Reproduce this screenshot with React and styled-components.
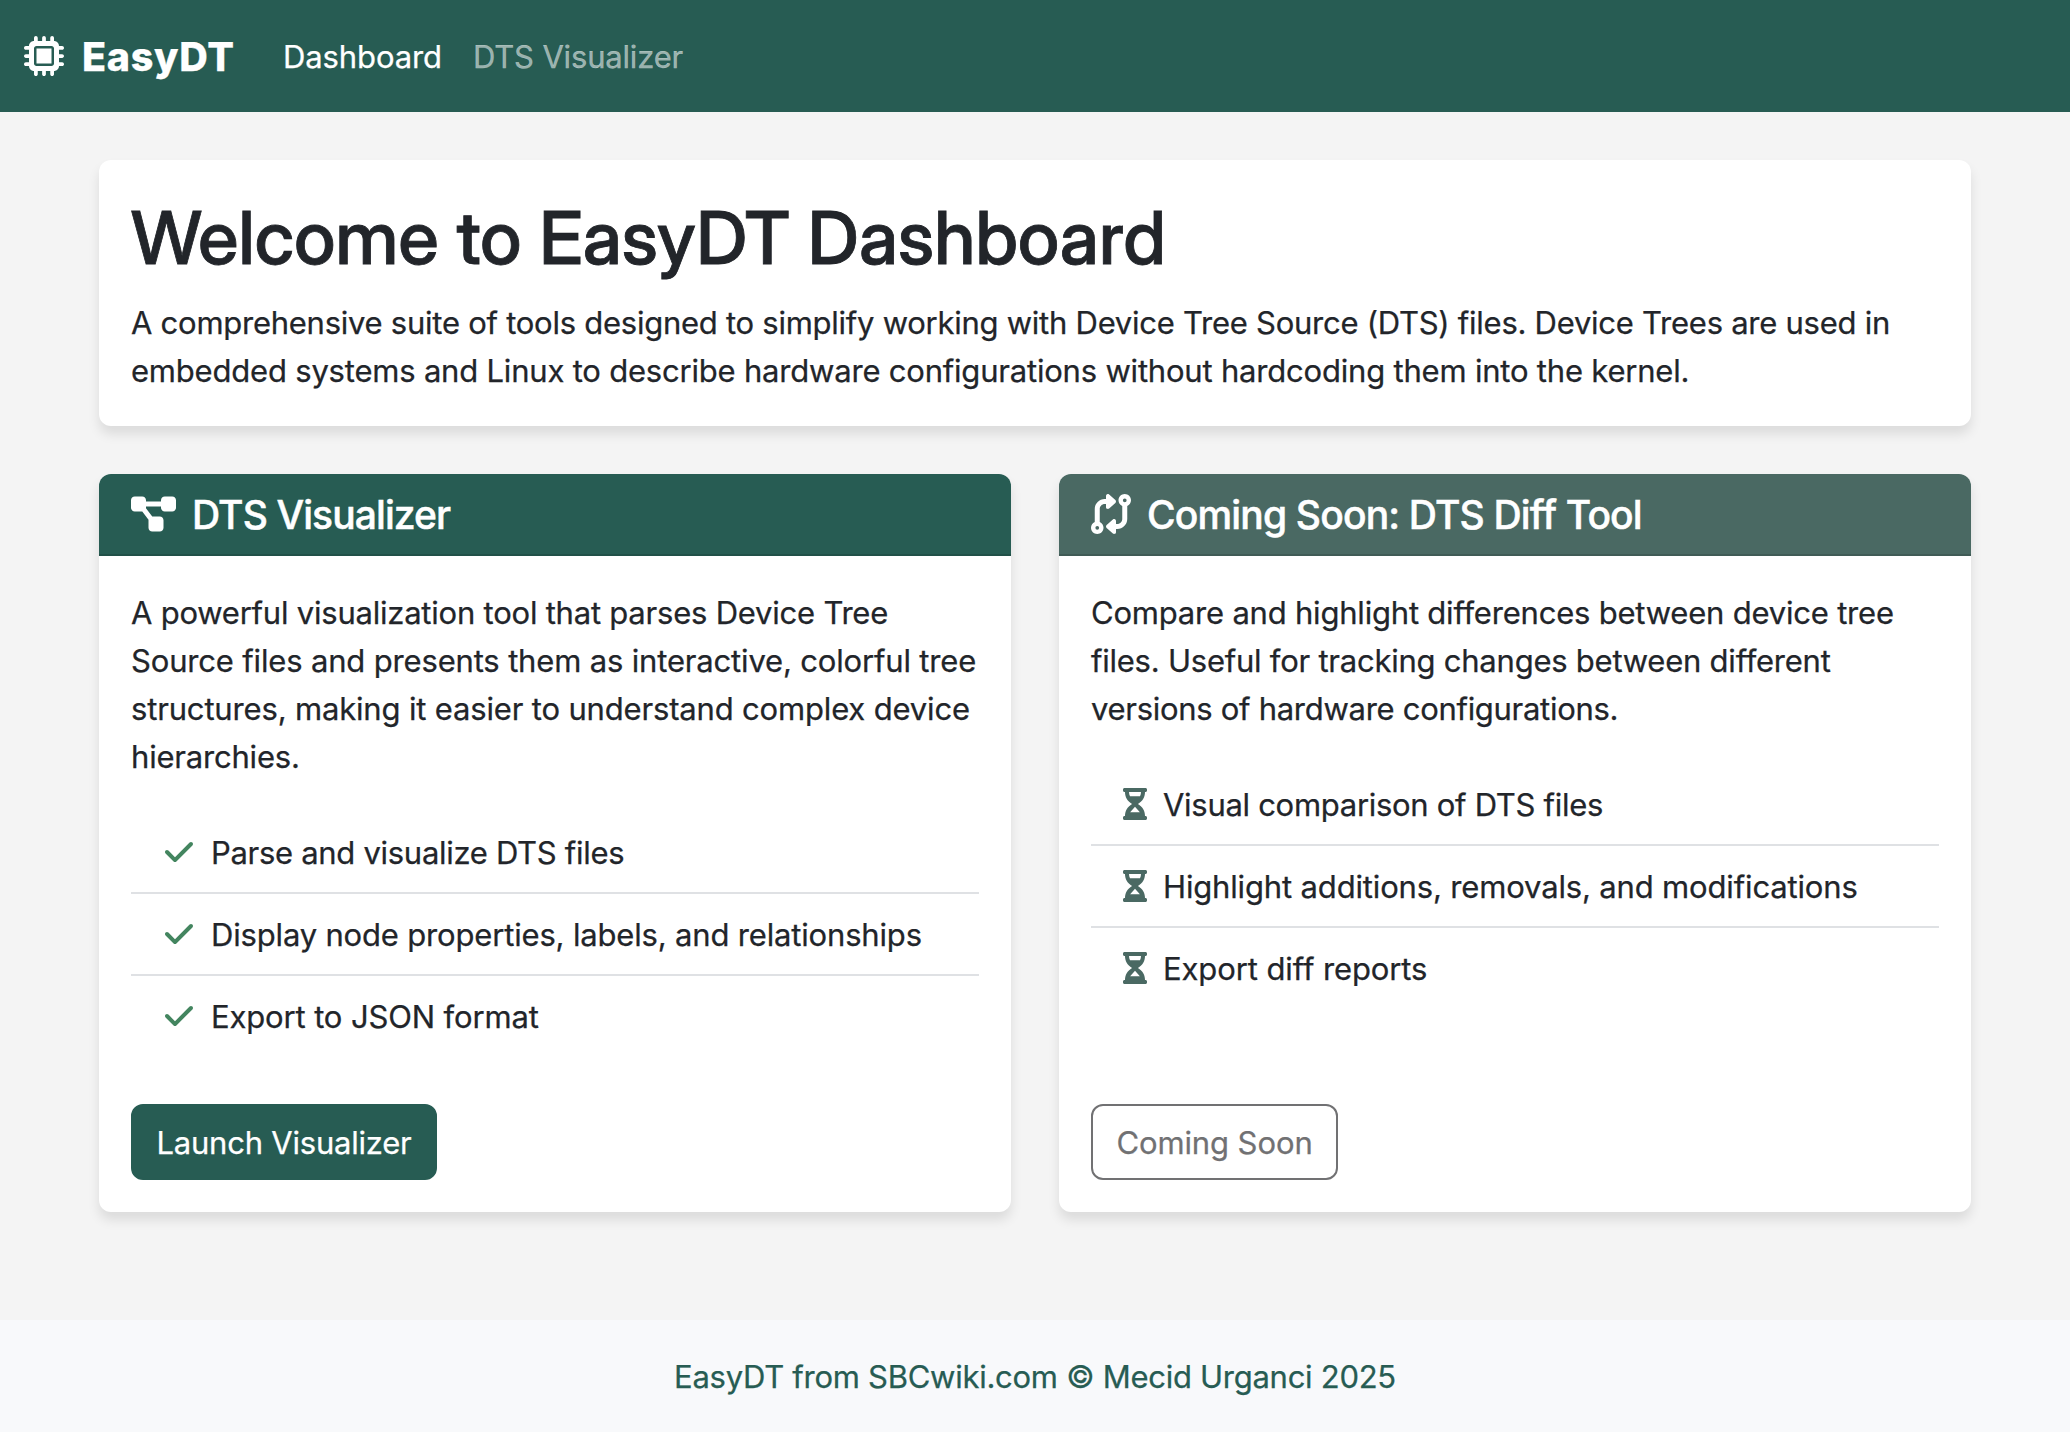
import React from "react";
import styled, { createGlobalStyle } from "styled-components";
import { FaMicrochip, FaDiagramProject, FaCodeCompare } from "react-icons/fa6";

const GlobalStyle = createGlobalStyle`
  *, *::before, *::after { box-sizing: border-box; }
  body {
    margin: 0;
    background: #f4f4f4;
    color: #22252a;
    font-family: Inter, "Liberation Sans", sans-serif;
    font-size: 31px;
    line-height: 48px;
    -webkit-text-stroke-width: 0.25px;
  }
`;

const Page = styled.div`
  display: flex;
  flex-direction: column;
  height: 1432px;
`;

const Navbar = styled.nav`
  display: flex;
  align-items: center;
  height: 112px;
  padding: 0 24px;
  background: #275c53;
  color: #fff;
`;

const Brand = styled.a`
  display: flex;
  align-items: center;
  gap: 18px;
  width: 259px;
  font-size: 39.5px;
  font-weight: 800;
  letter-spacing: 0.7px;
`;

const Label = styled.span`
  padding-top: 2px;
  line-height: 46px;
`;

const NavLink = styled.a`
  width: 190px;
  padding-top: 2px;
  white-space: nowrap;
  color: ${(p) => (p.$active ? "#fff" : "rgba(255, 255, 255, 0.55)")};
  letter-spacing: ${(p) => p.$track}px;
`;

const Main = styled.main`
  flex: 1;
  display: flex;
  flex-direction: column;
  gap: 48px;
  width: 1872px;
  margin: 0 auto;
  padding-top: 48px;
`;

const Panel = styled.section`
  display: flex;
  flex-direction: column;
  background: #fff;
  border-radius: 12px;
  box-shadow: 0 8px 12px rgba(0, 0, 0, 0.1);
  overflow: hidden;
`;

const Welcome = styled(Panel)`
  padding: 32px;
`;

const Title = styled.h1`
  margin: 1px 0 15px;
  font-family: "Inter Display", Inter, sans-serif;
  font-size: 73.5px;
  font-weight: 500;
  line-height: 90px;
  letter-spacing: 0.2px;
  white-space: nowrap;
  -webkit-text-stroke-width: 0.8px;
`;

const Paragraph = styled.p`
  margin: 0;
`;

const Line = styled(Label)`
  display: block;
  white-space: nowrap;
  letter-spacing: ${(p) => p.$track}px;
`;

const Columns = styled.div`
  display: grid;
  grid-template-columns: 1fr 1fr;
  gap: 48px;
  height: 738px;
`;

const CardHeader = styled.header`
  display: flex;
  align-items: center;
  gap: 16px;
  height: 82px;
  padding: 0 32px;
  border-bottom: 2px solid rgba(0, 0, 0, 0.13);
  background: ${(p) => p.$color};
  color: #fff;
`;

const CardTitle = styled.h5`
  margin: 0;
  padding-top: 2px;
  font-size: 39px;
  font-weight: 500;
  letter-spacing: ${(p) => p.$track}px;
  -webkit-text-stroke-width: 0.5px;
`;

const CardBody = styled.div`
  flex: 1;
  display: flex;
  flex-direction: column;
  align-items: flex-start;
  padding: 32px;
`;

const List = styled.ul`
  align-self: stretch;
  list-style: none;
  margin: 32px 0 0;
  padding: 0;
`;

const Item = styled.li`
  display: flex;
  align-items: center;
  gap: 16px;
  padding: 16px 32px;
  white-space: nowrap;
  letter-spacing: ${(p) => p.$track}px;

  & + & { border-top: 2px solid #dfe1e4; }
`;

const Glyph = styled.svg`
  flex: none;
  width: ${(p) => p.$width}px;
  height: ${(p) => p.$height || 32}px;
  fill: ${(p) => p.$color || "currentColor"};
`;

const Button = styled.button`
  height: 76px;
  width: ${(p) => p.$width}px;
  margin-top: auto;
  padding: 2px 0 0;
  font: inherit;
  letter-spacing: ${(p) => p.$track}px;
  border: 2px solid ${(p) => (p.$outline ? "#717173" : "#275c53")};
  border-radius: 12px;
  background: ${(p) => (p.$outline ? "transparent" : "#275c53")};
  color: ${(p) => (p.$outline ? "#717173" : "#fff")};
`;

const Footer = styled.footer`
  display: flex;
  align-items: center;
  justify-content: center;
  height: 112px;
  padding-top: 2px;
  background: #f8f9fb;
  color: #275c53;
  letter-spacing: -0.27px;
`;

const CheckIcon = () => (
  <Glyph viewBox="0 0 512 512" $width={32} $color="#43855f">
    <path d="M470.6 105.4c12.5 12.5 12.5 32.8 0 45.3l-256 256c-12.5 12.5-32.8 12.5-45.3 0l-128-128c-12.5-12.5-12.5-32.8 0-45.3s32.8-12.5 45.3 0L192 338.7 425.4 105.4c12.5-12.5 32.8-12.5 45.3 0z" />
  </Glyph>
);

const HourglassIcon = () => (
  <Glyph viewBox="0 0 384 512" $width={24} $color="#4a6963">
    <path
      fillRule="evenodd"
      d="M24 0h336c13 0 24 11 24 24v16c0 13-11 24-24 24h-8c0 82-35 145-113 192c78 47 113 110 113 192h8c13 0 24 11 24 24v16c0 13-11 24-24 24H24c-13 0-24-11-24-24v-16c0-13 11-24 24-24h8c0-82 35-145 113-192C67 209 32 146 32 64h-8C11 64 0 53 0 40V24C0 11 11 0 24 0zM96 64c0 25 6 46 16 68h160c10-22 16-43 16-68zM114 388h156L192 298z"
    />
  </Glyph>
);

const visualizerText = [
  ["A powerful visualization tool that parses Device Tree", -0.22],
  ["Source files and presents them as interactive, colorful tree", -0.165],
  ["structures, making it easier to understand complex device", -0.165],
  ["hierarchies.", -0.2],
];

const diffText = [
  ["Compare and highlight differences between device tree", -0.205],
  ["files. Useful for tracking changes between different", -0.235],
  ["versions of hardware configurations.", -0.29],
];

const welcomeText = [
  ["A comprehensive suite of tools designed to simplify working with Device Tree Source (DTS) files. Device Trees are used in", -0.256],
  ["embedded systems and Linux to describe hardware configurations without hardcoding them into the kernel.", -0.2],
];

const visualizerFeatures = [
  ["Parse and visualize DTS files", -0.3],
  ["Display node properties, labels, and relationships", -0.17],
  ["Export to JSON format", -0.141],
];

const diffFeatures = [
  ["Visual comparison of DTS files", -0.29],
  ["Highlight additions, removals, and modifications", -0.155],
  ["Export diff reports", -0.1],
];

const Lines = ({ lines }) => (
  <Paragraph>
    {lines.map(([text, track]) => (
      <Line key={text} $track={track}>{text} </Line>
    ))}
  </Paragraph>
);

const Features = ({ items, icon: Icon }) => (
  <List>
    {items.map(([text, track]) => (
      <Item key={text} $track={track}>
        <Icon />
        <Label>{text}</Label>
      </Item>
    ))}
  </List>
);

export default function App() {
  return (
    <>
      <GlobalStyle />
      <Page>
        <Navbar>
          <Brand>
            <Glyph as={FaMicrochip} $width={40} $height={40} />
            <Label>EasyDT</Label>
          </Brand>
          <NavLink $active $track={-0.1}>Dashboard</NavLink>
          <NavLink $track={-0.17}>DTS Visualizer</NavLink>
        </Navbar>

        <Main>
          <Welcome>
            <Title>Welcome to EasyDT Dashboard</Title>
            <Lines lines={welcomeText} />
          </Welcome>

          <Columns>
            <Panel>
              <CardHeader $color="#275c53">
                <Glyph as={FaDiagramProject} $width={45} $height={40} />
                <CardTitle $track={-0.9}>DTS Visualizer</CardTitle>
              </CardHeader>
              <CardBody>
                <Lines lines={visualizerText} />
                <Features items={visualizerFeatures} icon={CheckIcon} />
                <Button $width={306} $track={-0.224}>Launch Visualizer</Button>
              </CardBody>
            </Panel>

            <Panel>
              <CardHeader $color="#4a6963">
                <Glyph as={FaCodeCompare} $width={40} $height={40} />
                <CardTitle $track={-0.83}>Coming Soon: DTS Diff Tool</CardTitle>
              </CardHeader>
              <CardBody>
                <Lines lines={diffText} />
                <Features items={diffFeatures} icon={HourglassIcon} />
                <Button $outline $width={247} $track={-0.1}>Coming Soon</Button>
              </CardBody>
            </Panel>
          </Columns>
        </Main>

        <Footer>EasyDT from SBCwiki.com © Mecid Urganci 2025</Footer>
      </Page>
    </>
  );
}
